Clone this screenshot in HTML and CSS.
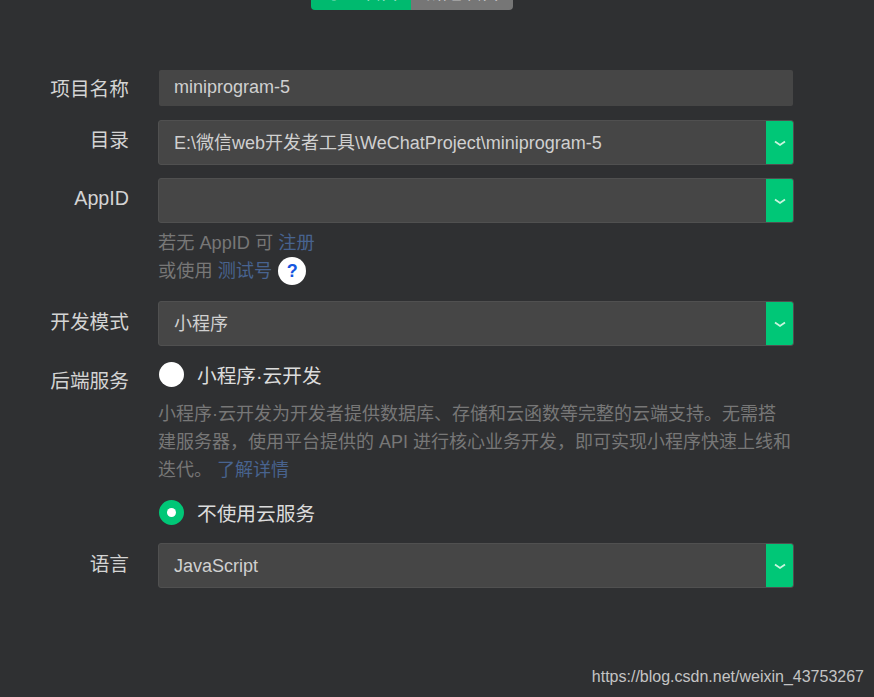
FILE: index.html
```html
<!DOCTYPE html>
<html lang="zh">
<head>
<meta charset="utf-8">
<title>新建项目</title>
<link rel="stylesheet" href="styles.css">
</head>
<body>
<div class="tabs">
  <div class="tab tab-on">导入项目</div>
  <div class="tab tab-off">新建项目</div>
</div>
<form class="form">
  <div class="row row-name">
    <div class="label">项目名称</div>
    <div class="field input">miniprogram-5</div>
  </div>
  <div class="row row-dir">
    <div class="label">目录</div>
    <div class="field select"><span class="value">E:\微信web开发者工具\WeChatProject\miniprogram-5</span><span class="arrow"><svg width="12" height="7" viewBox="0 0 12 7"><path d="M1 1.5 6 5 11 1.5" fill="none" stroke="#c9f5de" stroke-width="1.8"/></svg></span></div>
  </div>
  <div class="row row-app">
    <div class="label">AppID</div>
    <div class="stack">
      <div class="field select"><span class="value"></span><span class="arrow"><svg width="12" height="7" viewBox="0 0 12 7"><path d="M1 1.5 6 5 11 1.5" fill="none" stroke="#c9f5de" stroke-width="1.8"/></svg></span></div>
      <div class="hint hint-first">若无 AppID 可 <span class="link">注册</span></div>
      <div class="hint hint-second">或使用 <span class="link">测试号</span><span class="help">?</span></div>
    </div>
  </div>
  <div class="row row-mode">
    <div class="label">开发模式</div>
    <div class="field select"><span class="value">小程序</span><span class="arrow"><svg width="12" height="7" viewBox="0 0 12 7"><path d="M1 1.5 6 5 11 1.5" fill="none" stroke="#c9f5de" stroke-width="1.8"/></svg></span></div>
  </div>
  <div class="row row-cloud">
    <div class="label">后端服务</div>
    <div class="stack">
      <div class="radio-line"><span class="radio"></span><span>小程序·云开发</span></div>
      <p class="desc">小程序·云开发为开发者提供数据库、存储和云函数等完整的云端支持。无需搭建服务器，使用平台提供的 API 进行核心业务开发，即可实现小程序快速上线和迭代。 <span class="link">了解详情</span></p>
      <div class="radio-line radio-line-on"><span class="radio radio-on"></span><span>不使用云服务</span></div>
    </div>
  </div>
  <div class="row row-lang">
    <div class="label">语言</div>
    <div class="field select"><span class="value">JavaScript</span><span class="arrow"><svg width="12" height="7" viewBox="0 0 12 7"><path d="M1 1.5 6 5 11 1.5" fill="none" stroke="#c9f5de" stroke-width="1.8"/></svg></span></div>
  </div>
</form>
<div class="watermark">https://blog.csdn.net/weixin_43753267</div>
</body>
</html>
```
FILE: styles.css
```css
* { box-sizing: border-box; }
html, body { height: 100%; }
body {
  margin: 0;
  background: #2f3032;
  color: #d6d6d6;
  font-family: "Liberation Sans", "Noto Sans CJK SC", sans-serif;
  overflow: hidden;
  position: relative;
}
.tabs {
  display: flex;
  width: 202px;
  height: 30px;
  margin: -20px 0 0 311px;
  border-radius: 0 0 4px 4px;
  overflow: hidden;
}
.tab {
  height: 30px;
  line-height: 25px;
  text-align: center;
  font-size: 19px;
  color: #fff;
}
.tab-on { width: 100px; background: #00ba6f; }
.tab-off { width: 102px; background: #767676; }
.form { margin-top: 60px; width: 794px; }
.row { display: flex; }
.label {
  width: 129px;
  margin-right: 29px;
  flex: none;
  text-align: right;
  font-size: 19.7px;
  color: #d4d4d4;
}
.stack { flex: 1; min-width: 0; }
.field {
  flex: 1;
  background: #464646;
  font-size: 18px;
  color: #d0d0d0;
}
.input {
  height: 36px;
  line-height: 34px;
  margin: 0 1px;
  padding-left: 15px;
  border-radius: 2px;
}
.select {
  height: 45px;
  display: flex;
  border: 1px solid #505050;
  border-radius: 3px;
  overflow: hidden;
}
.value {
  flex: 1;
  padding-left: 15px;
  line-height: 44px;
  white-space: nowrap;
}
.arrow {
  flex: none;
  width: 27px;
  padding-top: 1px;
  background: #00c777;
  display: flex;
  align-items: center;
  justify-content: center;
}
.row-name .label { line-height: 38px; }
.row-dir { margin-top: 12px; }
.row-dir .label { line-height: 40px; }
.row-app { margin-top: 13px; }
.row-app .label { line-height: 40px; }
.hint {
  font-size: 18.2px;
  color: #777;
  line-height: 28px;
}
.hint-first { margin-top: 6px; }
.hint-second { display: flex; align-items: center; white-space: pre; }
.link { color: #48638f; }
.help {
  width: 28px;
  height: 28px;
  margin-left: 6px;
  border-radius: 50%;
  background: #fff;
  color: #1556e0;
  font-size: 18px;
  font-weight: bold;
  line-height: 28px;
  text-align: center;
}
.row-mode { margin-top: 16px; }
.row-mode .label { line-height: 43px; }
.row-cloud { margin-top: 13px; }
.row-cloud .label { line-height: 44px; }
.radio-line {
  display: flex;
  align-items: center;
  height: 30px;
  font-size: 19.7px;
  color: #dcdcdc;
  gap: 13px;
}
.radio {
  width: 25px;
  height: 25px;
  margin-left: 1px;
  border-radius: 50%;
  background: #fff;
  flex: none;
}
.radio-on {
  background: #00c777;
  border: 8px solid #00c777;
}
.radio-on::after {
  content: "";
  display: block;
  width: 9px;
  height: 9px;
  border-radius: 50%;
  background: #fff;
}
.desc {
  margin: 11px 0 0;
  padding-right: 2px;
  font-size: 18px;
  line-height: 28px;
  color: #777;
}
.radio-line-on { margin-top: 13px; }
.row-lang { margin-top: 16px; }
.row-lang .label { line-height: 42px; }
.watermark {
  position: absolute;
  right: 10px;
  bottom: 10px;
  font-size: 16px;
  line-height: 20px;
  color: #c4c4c4;
}
```
